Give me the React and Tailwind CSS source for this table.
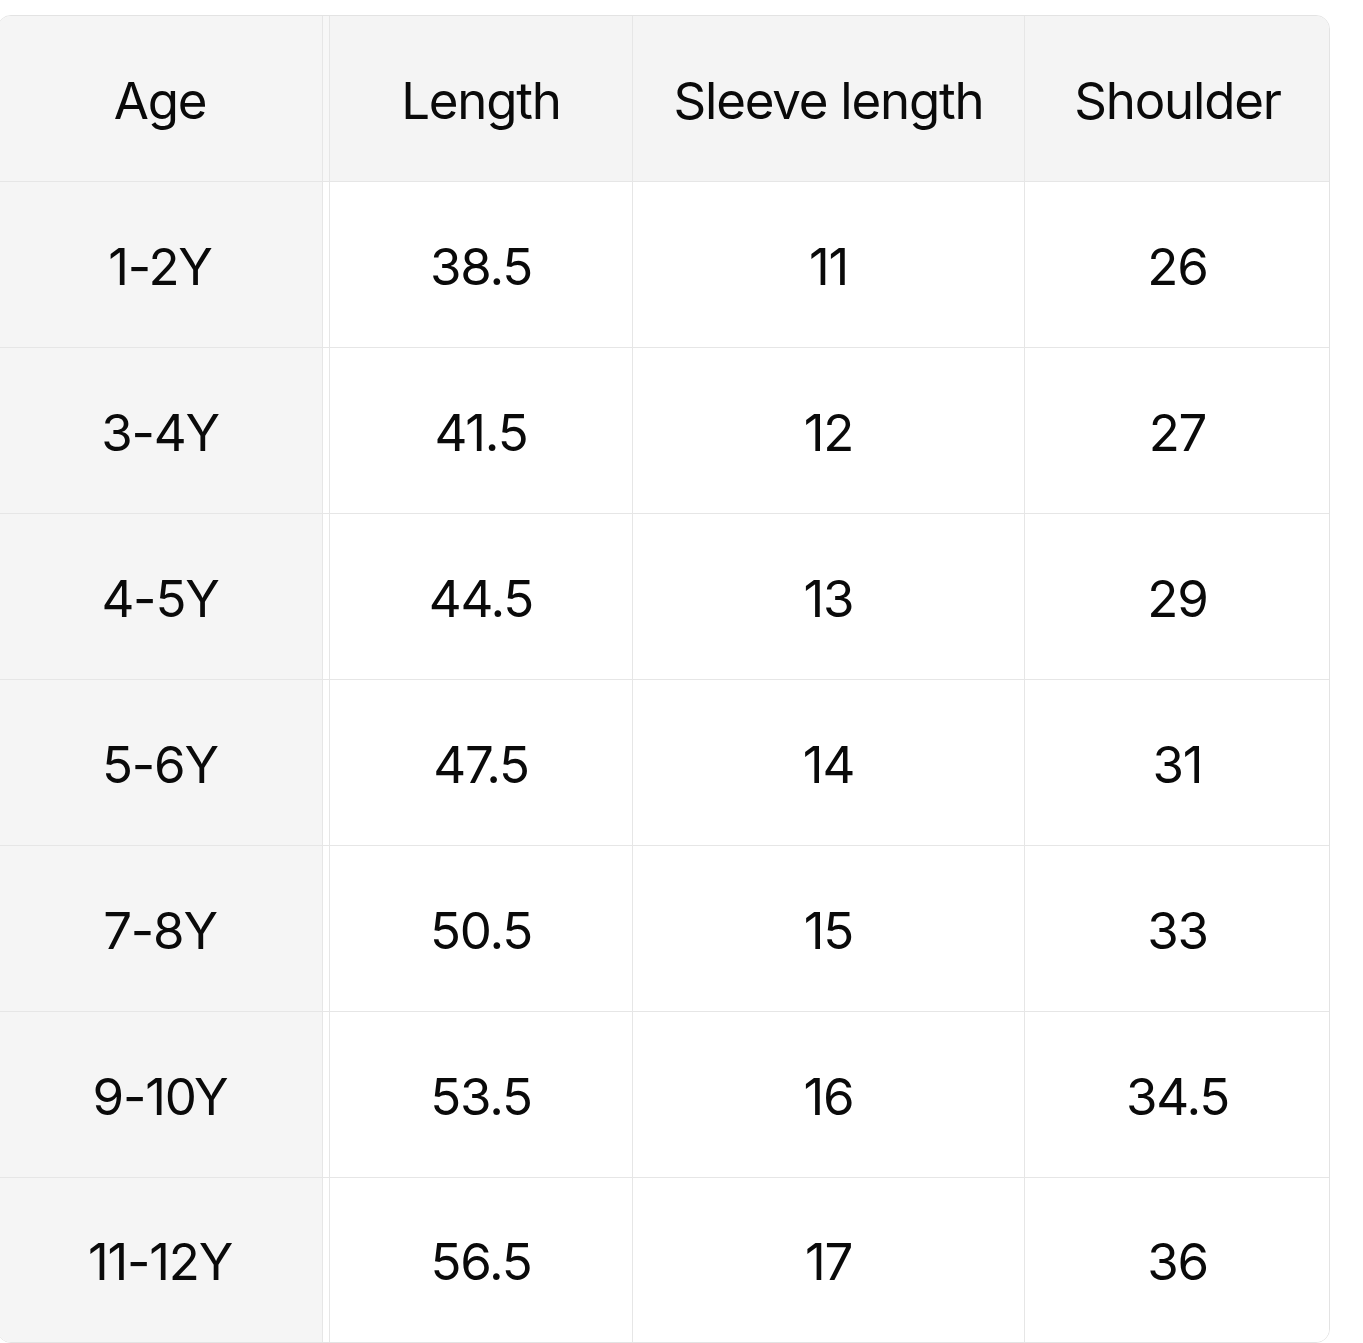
import React from "react";

const headers = ["Age", "Length", "Sleeve length", "Shoulder"];

const rows = [
  ["1-2Y", "38.5", "11", "26"],
  ["3-4Y", "41.5", "12", "27"],
  ["4-5Y", "44.5", "13", "29"],
  ["5-6Y", "47.5", "14", "31"],
  ["7-8Y", "50.5", "15", "33"],
  ["9-10Y", "53.5", "16", "34.5"],
  ["11-12Y", "56.5", "17", "36"],
];

function Row({ cells, header, last }) {
  return (
    <div
      className={`grid grid-cols-[325px_6px_304px_392px_305px] ${
        last ? "h-[164px]" : "h-[166px] border-b border-[#e6e6e6]"
      } ${header ? "bg-[#f4f4f4]" : "bg-white"}`}
    >
      <div className="flex items-center justify-center pt-[5px] bg-[#f5f5f5] border-r border-[#e6e6e6]">
        {cells[0]}
      </div>
      <div className={header ? "bg-[#f7f7f7]" : "bg-white"} />
      <div className="flex items-center justify-center pt-[5px] border-l border-r border-[#e6e6e6]">
        {cells[1]}
      </div>
      <div className="flex items-center justify-center pt-[5px] border-r border-[#e6e6e6]">
        {cells[2]}
      </div>
      <div className="flex items-center justify-center pt-[5px]">{cells[3]}</div>
    </div>
  );
}

export default function App() {
  return (
    <div
      className="bg-white w-[1363px] h-[1343px] overflow-hidden pt-[15px] text-[51px] tracking-[-1.2px] text-[#0a0a0a]"
      style={{ fontFamily: "Inter, 'Noto Sans', sans-serif" }}
    >
      <div className="-ml-[3px] w-[1333px] h-[1328px] border border-[#e3e3e3] rounded-[14px] overflow-hidden">
        <Row cells={headers} header />
        {rows.map((r, i) => (
          <Row key={i} cells={r} last={i === rows.length - 1} />
        ))}
      </div>
    </div>
  );
}
